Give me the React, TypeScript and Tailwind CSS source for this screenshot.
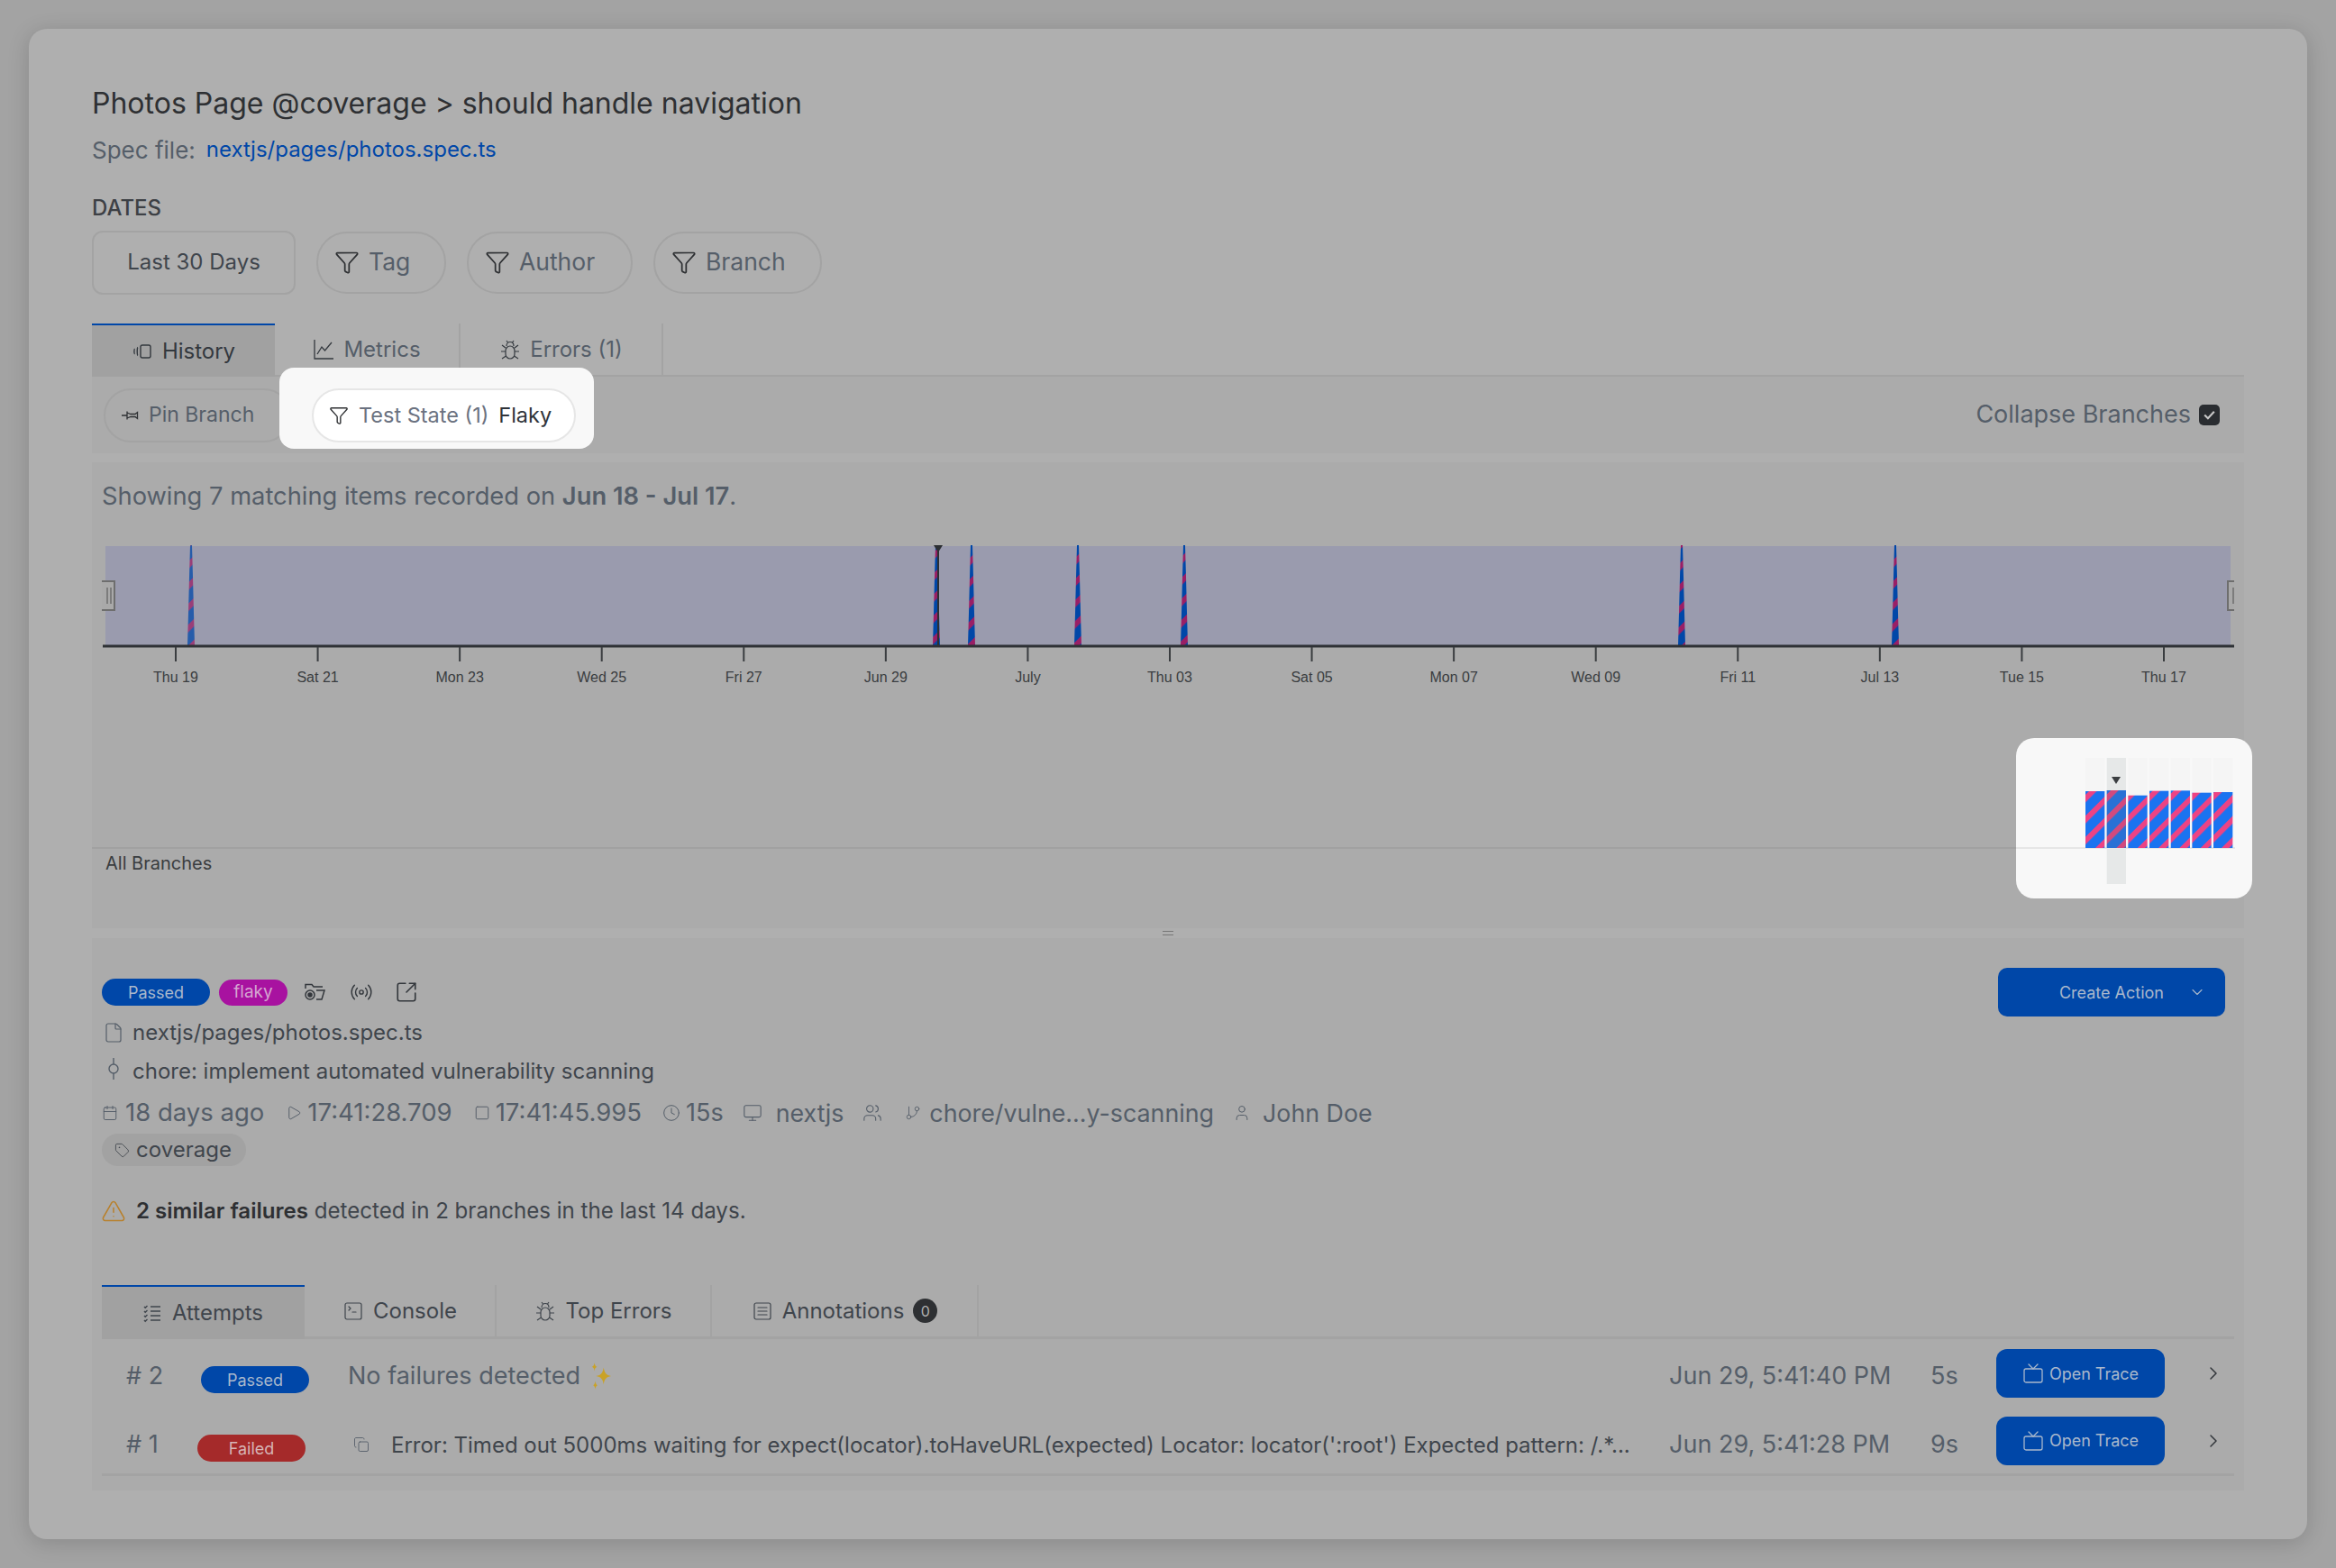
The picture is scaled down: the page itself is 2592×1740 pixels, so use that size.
import {
  Calendar,
  ChevronDown,
  ChevronRight,
  Clock,
  Copy,
  File,
  Filter,
  GitBranch,
  Monitor,
  Play,
  Radio,
  Square,
  SquareArrowOutUpRight,
  SquareMenu,
  SquareTerminal,
  Tag,
  TriangleAlert,
  Tv,
  User,
  Users,
} from "lucide-react";

const ticks = ["Thu 19", "Sat 21", "Mon 23", "Wed 25", "Fri 27", "Jun 29", "July", "Thu 03", "Sat 05", "Mon 07", "Wed 09", "Fri 11", "Jul 13", "Tue 15", "Thu 17"];
const spikes = [110, 937, 976, 1094, 1212, 1764, 2001];
const barTops = [894, 891, 908, 893, 892, 899, 897];

function HistoryIcon() {
  return (
    <svg width="24" height="24" viewBox="0 0 24 24" fill="none" stroke="currentColor" strokeWidth="1.400">
      <rect x="10" y="5" width="11" height="14" rx="2" />
      <path d="M7 7.500c-1 .5-1 8.500 0 9M3.500 9c-.8.5-.8 5.500 0 6" />
    </svg>
  );
}

function MetricsIcon() {
  return (
    <svg width="24" height="24" viewBox="0 0 24 24" fill="none" stroke="currentColor" strokeWidth="1.300">
      <path d="M2 1v21h21" />
      <path d="M5 17l5-8 3.500 4L21 4" />
    </svg>
  );
}

function BugIcon() {
  return (
    <svg width="24" height="24" viewBox="0 0 24 24" fill="none" stroke="currentColor" strokeWidth="1.200">
      <path d="M8 8c0-6 8-6 8 0" />
      <rect x="7" y="8" width="10" height="14" rx="5" />
      <path d="M8 2l1.500 2M16 2l-1.500 2M7 10L3 7M17 10l4-3M7 14H2M17 14h5M7.500 19L3 22M16.500 19l4.500 3" />
    </svg>
  );
}

function PinIcon() {
  return (
    <svg width="20" height="20" viewBox="0 0 20 20" fill="none" stroke="#2e3033" strokeWidth="1.300">
      <path d="M0 10h6M6 5.500v9M6 7l4 1.500h5l2.500-2v7l-2.500-2h-5L6 13" />
    </svg>
  );
}

function CommitIcon() {
  return (
    <svg width="24" height="24" viewBox="0 0 24 24" fill="none" stroke="currentColor" strokeWidth="1.400" className="ml-[1px] mr-[9px] -mt-[6px]">
      <circle cx="12" cy="12" r="5" />
      <path d="M12 0v7M12 17v7" />
    </svg>
  );
}

function FolderCamIcon() {
  return (
    <svg width="24" height="24" viewBox="0 0 24 24" fill="none" stroke="#33373c" strokeWidth="1.500">
      <path d="M2 8V3.500h7l2 2.500h10M14 10h9l-3 10h-6" />
      <circle cx="7" cy="15" r="5" />
      <circle cx="7" cy="15" r="2" fill="#33373c" />
    </svg>
  );
}

function AttemptsIcon() {
  return (
    <svg width="24" height="24" viewBox="0 0 24 24" fill="none" stroke="currentColor" strokeWidth="1.400">
      <path d="M10 5h11M10 10h11M10 15h11M10 20h11" />
      <path d="M3 5l1.200 1.200L6.500 4M3 10l1.200 1.200L6.500 9M3 15l1.200 1.200L6.500 14M3 20l1.200 1.200L6.500 19" />
    </svg>
  );
}

function Sparkle() {
  return (
    <svg width="24" height="34" viewBox="0 0 26 34" fill="#c9a227">
      <path d="M16 7c1 6 3 9 9 10-6 1-8 4-9 10-1-6-3-9-9-10 6-1 8-4 9-10z" />
      <path d="M5 1c.4 3 1.200 4.200 3 5-1.800.8-2.600 2-3 5-.4-3-1.200-4.200-3-5 1.800-.8 2.600-2 3-5z" />
      <path d="M6 23c.4 3 1 4.200 2.500 5-1.500.8-2.100 2-2.500 5-.4-3-1-4.200-2.500-5 1.500-.8 2.100-2 2.500-5z" />
    </svg>
  );
}

function Timeline() {
  return (
    <svg width="2388" height="180" viewBox="0 0 2388 180" className="block" fontFamily="'Liberation Sans', Arial, sans-serif">
      <defs>
        <pattern id="dimStripe" width="16.500" height="16.500" patternUnits="userSpaceOnUse" patternTransform="rotate(45)">
          <rect width="16.500" height="16.500" fill="#0047a8" />
          <rect width="6" height="16.500" fill="#991f66" />
        </pattern>
      </defs>
      <rect x="15" y="16" width="2358" height="110" fill="#9a9bae" />
      {spikes.map((x, i) => (
        <path
          key={x}
          d={`M${x - 1} 15 L${x + 1} 15 L${x + 2} 50 L${x + 3} 90 L${x + 4} 126 L${x - 4} 126 L${x - 3} 90 L${x - 2} 50 Z`}
          fill="url(#dimStripe)"
          opacity={i === 0 ? 0.75 : 1}
        />
      ))}
      <path d="M939 16v110" stroke="#2c2f33" strokeWidth="2" />
      <path d="M934 15h10l-5 8z" fill="#2c2f33" />
      <path d="M12 127h2365" stroke="#2f3236" strokeWidth="3" />
      {ticks.map((t, i) => {
        const x = 93 + i * 157.57;
        return (
          <g key={t}>
            <path d={`M${x} 128v16`} stroke="#3a3d40" strokeWidth="2" />
            <text x={x} y="167" textAnchor="middle" fontSize="16" fill="#3a3d40">{t}</text>
          </g>
        );
      })}
      <path d="M11 55h14v32h-14" fill="#a9a9a9" stroke="#6e6e6e" strokeWidth="2" />
      <path d="M17 62v18M21 62v18" stroke="#7c7c7c" strokeWidth="2" />
      <path d="M2377 55h-7v32h7" fill="#a9a9a9" stroke="#6e6e6e" strokeWidth="2" />
      <path d="M2376 62v18" stroke="#7c7c7c" strokeWidth="2" />
    </svg>
  );
}

function FlakyBars() {
  return (
    <svg width="262" height="178" viewBox="0 0 262 178" className="block">
      <defs>
        <pattern id="brightStripe" width="16.500" height="16.500" patternUnits="userSpaceOnUse" patternTransform="rotate(45)">
          <rect width="16.500" height="16.500" fill="#1a73f0" />
          <rect width="6" height="16.500" fill="#ec4384" />
        </pattern>
      </defs>
      <path d="M0 122h243" stroke="#e6e6e6" strokeWidth="2" />
      {barTops.map((top, i) => {
        const x = 77 + i * 23.67;
        const y = top / 3 + 580 - 819;
        return (
          <g key={top + "-" + i}>
            <rect x={x} y={22} width={21.3} height={i === 1 ? 140 : 100} fill={i === 1 ? "#e6e8e8" : "#f5f5f5"} />
            <rect x={x} y={y} width={21.3} height={122 - y} fill="url(#brightStripe)" />
            {i === 1 && <rect x={x} y={y} width={21.3} height={122 - y} fill="#6b6b6b" opacity="0.2" />}
          </g>
        );
      })}
      <path d="M106 43h10l-5 8z" fill="#3a3d40" />
    </svg>
  );
}

export default function App() {
  return (
    <div className="w-[2592px] h-[1740px] bg-[#a3a3a3] p-[32px] font-['Inter',sans-serif] text-[#555e69] overflow-hidden">
      <div className="h-[1676px] rounded-[20px] bg-[#afafaf] px-[70px] pt-[60px] shadow-[0_4px_24px_rgba(0,0,0,0.16)]">
        <h1 className="h-[46px] flex items-center text-[32px] text-[#2e3033]">Photos Page @coverage &gt; should handle navigation</h1>
        <div className="mt-[10px] h-[36px] flex items-center gap-[12px]">
          <span className="text-[26px]">Spec file:</span>
          <span className="text-[24px] text-[#0047a8]">nextjs/pages/photos.spec.ts</span>
        </div>
        <div className="mt-[32px] h-[30px] flex items-center text-[24px] font-medium text-[#3d4045]">DATES</div>

        <div className="mt-[9px] h-[72px] flex items-center gap-[23px] text-[26.500px]">
          <div className="w-[226px] h-[71px] flex items-center justify-center rounded-[12px] border-2 border-[#a3a3a3] text-[#3f454c] text-[24px]">Last 30 Days</div>
          {[["Tag", "w-[144px]"], ["Author", "w-[184px]"], ["Branch", "w-[187px]"]].map(([label, w]) => (
            <div key={label} className={w + " h-[69px] flex items-center gap-[10px] pl-[18px] rounded-[34px] border-2 border-[#a3a3a3]"}>
              <Filter size={28} strokeWidth={1.500} className="text-[#2e3033]" />
              <span>{label}</span>
            </div>
          ))}
        </div>

        <div className="mt-[32px] h-[59px] flex text-[24px] border-b-2 border-[#a3a3a3]">
          <div className="w-[203px] h-[59px] flex items-center justify-center gap-[10px] bg-[#a1a1a1] border-t-2 border-[#0047a8] text-[#33383e]">
            <HistoryIcon />
            <span>History</span>
          </div>
          <div className="w-[206px] flex items-center justify-center gap-[10px] border-r-2 border-[#a3a3a3]">
            <span className="text-[#33383e]"><MetricsIcon /></span>
            <span>Metrics</span>
          </div>
          <div className="w-[225px] flex items-center justify-center gap-[10px] border-r-2 border-[#a3a3a3]">
            <span className="text-[#33383e]"><BugIcon /></span>
            <span>Errors (1)</span>
          </div>
        </div>

        <div className="relative h-[85px] bg-[#ababab] flex items-center justify-between pl-[13px] pr-[27px]">
          <div className="w-[208px] h-[60px] flex items-center gap-[10px] pl-[18px] rounded-full border-2 border-[#a3a3a3] text-[23px]">
            <PinIcon />
            <span>Pin Branch</span>
          </div>
          <div className="absolute left-[208px] top-[-10px] w-[349px] h-[90px] rounded-[16px] bg-[#f8f8f8] pl-[36px] pt-[23px]">
            <div className="w-[293px] h-[60px] flex items-center pl-[17px] rounded-full border-2 border-[#e6e6e6] bg-white text-[23.500px] text-[#6b7280]">
              <Filter size={22} strokeWidth={1.500} className="text-[#2e3033] mr-[11px]" />
              <span className="mr-[11px]">Test State (1)</span>
              <span className="text-[#30343a]">Flaky</span>
            </div>
          </div>
          <div className="flex items-center gap-[9px] text-[27px]">
            <span>Collapse Branches</span>
            <div className="w-[23px] h-[23px] rounded-[5px] bg-[#2a2d31] flex items-center justify-center">
              <svg width="17" height="17" viewBox="0 0 16 16" fill="none" stroke="#c8c8c8" strokeWidth="2"><path d="M3 8l3.500 3.500L13 4.500" /></svg>
            </div>
          </div>
        </div>

        <div className="relative mt-[10px] h-[517px] bg-[#ababab]">
          <div className="h-[77px] pt-[18px] pl-[11px] text-[27.300px]">
            Showing 7 matching items recorded on <b className="font-semibold">Jun 18 - Jul 17</b>.
          </div>
          <Timeline />
          <div className="h-[172px] border-b-2 border-[#a1a1a1]" />
          <div className="pl-[15px] mt-[1px] text-[20px] text-[#3a3d40]">All Branches</div>
          <div className="absolute left-[2135px] top-[306px] w-[262px] h-[178px] rounded-[20px] bg-[#f8f8f8] overflow-hidden">
            <FlakyBars />
          </div>
        </div>

        <div className="h-[11px] flex items-center justify-center">
          <div className="w-[12px] h-[5px] border-y border-[#777]" />
        </div>

        <div className="h-[613px] bg-[#ababab] px-[11px] pt-[33px]">
          <div className="h-[54px] flex items-center justify-between">
            <div className="flex items-center">
              <span className="w-[120px] h-[30px] rounded-full bg-[#0047a8] text-[#a9b8cc] text-[18px] flex items-center justify-center">Passed</span>
              <span className="ml-[10px] w-[76px] h-[29px] rounded-full bg-[#a812a0] text-[#d5a5d1] text-[19px] flex items-center justify-center">flaky</span>
              <span className="ml-[18px]"><FolderCamIcon /></span>
              <Radio size={26} strokeWidth={1.300} className="ml-[27px] text-[#33373c]" />
              <SquareArrowOutUpRight size={26} strokeWidth={1.500} className="ml-[24px] text-[#33373c]" />
            </div>
            <div className="mr-[10px] w-[252px] h-[54px] rounded-[10px] bg-[#0047a8] text-[#a9b8cc] text-[18px] flex items-center justify-end pr-[21px]">
              <span>Create Action</span>
              <ChevronDown size={20} strokeWidth={1.300} className="ml-[27px]" />
            </div>
          </div>

          <div className="h-[36px] flex items-center text-[24px] text-[#3f454c]">
            <File size={24} strokeWidth={1.200} className="text-[#555e69] mr-[9px] ml-[1px]" />
            <span>nextjs/pages/photos.spec.ts</span>
          </div>
          <div className="mt-[7px] h-[36px] flex items-center text-[24px] text-[#3f454c]">
            <span className="text-[#555e69]"><CommitIcon /></span>
            <span>chore: implement automated vulnerability scanning</span>
          </div>
          <div className="mt-[9px] h-[38px] flex items-center text-[27.500px] whitespace-nowrap">
            <Calendar size={18} strokeWidth={1.300} className="mr-[8px]" />
            <span>18 days ago</span>
            <Play size={18} strokeWidth={1.300} className="ml-[24px] mr-[6px]" />
            <span>17:41:28.709</span>
            <Square size={18} strokeWidth={1.300} className="ml-[24px] mr-[6px]" />
            <span>17:41:45.995</span>
            <Clock size={20} strokeWidth={1.200} className="ml-[23px] mr-[6px]" />
            <span className="text-[27px]">15s</span>
            <Monitor size={22} strokeWidth={1.200} className="ml-[21px] mr-[15px]" />
            <span className="text-[26.800px]">nextjs</span>
            <Users size={22} strokeWidth={1.200} className="ml-[21px]" />
            <GitBranch size={18} strokeWidth={1.200} className="ml-[25px] mr-[9px]" />
            <span className="text-[26.800px]">chore/vulne...y-scanning</span>
            <User size={20} strokeWidth={1.200} className="ml-[21px] mr-[13px]" />
            <span className="text-[26.800px]">John Doe</span>
          </div>
          <div className="mt-[4px] w-[160px] h-[36px] rounded-full bg-[#a2a2a2] flex items-center gap-[7px] pl-[14px] text-[24px] text-[#3f454c]">
            <Tag size={17} strokeWidth={1.200} />
            <span>coverage</span>
          </div>
          <div className="mt-[32px] h-[36px] flex items-center text-[24.100px] text-[#3f454c]">
            <TriangleAlert size={28} strokeWidth={1.300} className="text-[#b8802c] -ml-[1px] mr-[11px]" />
            <span><b className="font-semibold text-[#2e3033]">2 similar failures</b> detected in 2 branches in the last 14 days.</span>
          </div>

          <div className="mt-[64px] h-[60px] flex text-[24px] border-b-[3px] border-[#a3a3a3] text-[#3f454c]">
            <div className="w-[225px] h-[60px] flex items-center justify-center gap-[10px] pr-[2px] bg-[#a1a1a1] border-t-2 border-[#0047a8]">
              <AttemptsIcon />
              <span>Attempts</span>
            </div>
            <div className="w-[213px] flex items-center justify-center gap-[10px] border-r-2 border-[#a3a3a3]">
              <SquareTerminal size={24} strokeWidth={1.200} />
              <span>Console</span>
            </div>
            <div className="w-[239px] flex items-center justify-center gap-[10px] border-r-2 border-[#a3a3a3]">
              <BugIcon />
              <span>Top Errors</span>
            </div>
            <div className="w-[296px] flex items-center justify-center gap-[10px] border-r-2 border-[#a3a3a3]">
              <SquareMenu size={24} strokeWidth={1.200} />
              <span>Annotations</span>
              <span className="w-[27px] h-[27px] rounded-full bg-[#2e3033] text-[#b0b0b0] text-[16px] flex items-center justify-center">0</span>
            </div>
          </div>

          <div className="h-[76px] flex items-center">
            <span className="w-[110px] pl-[27px] text-[27px] mt-[6px]"># 2</span>
            <span className="w-[120px] h-[30px] mt-[14px] rounded-full bg-[#0047a8] text-[#a9b8cc] text-[18px] flex items-center justify-center">Passed</span>
            <span className="ml-[43px] flex items-center gap-[11px] text-[27px] mt-[6px]">No failures detected <Sparkle /></span>
            <span className="ml-auto w-[290px] text-[27px] mt-[6px]">Jun 29, 5:41:40 PM</span>
            <span className="w-[73px] text-[27px] mt-[6px]">5s</span>
            <TraceButton />
            <ChevronRight size={24} strokeWidth={1.500} className="ml-[42px] mr-[11px] text-[#33373c]" />
          </div>
          <div className="h-[76px] flex items-center border-b-[3px] border-[#a3a3a3]">
            <span className="w-[106px] pl-[27px] text-[27px] mt-[9px]"># 1</span>
            <span className="w-[120px] h-[30px] mt-[17px] rounded-full bg-[#a52a2a] text-[#d7b5b5] text-[18px] flex items-center justify-center">Failed</span>
            <Copy size={18} strokeWidth={1.200} className="ml-[53px] mr-[24px] mt-[9px]" />
            <span className="shrink-0 whitespace-nowrap text-[24px] text-[#3f454c] mt-[10px]">Error: Timed out 5000ms waiting for expect(locator).toHaveURL(expected) Locator: locator(':root') Expected pattern: /.*...</span>
            <span className="ml-auto w-[290px] text-[27px] mt-[9px]">Jun 29, 5:41:28 PM</span>
            <span className="w-[73px] text-[27px] mt-[9px]">9s</span>
            <TraceButton />
            <ChevronRight size={24} strokeWidth={1.500} className="ml-[42px] mr-[11px] text-[#33373c]" />
          </div>
        </div>
      </div>
    </div>
  );
}

function TraceButton() {
  return (
    <div className="w-[187px] h-[54px] rounded-[12px] bg-[#0047a8] text-[#a9b8cc] text-[18px] flex items-center justify-center gap-[6px]">
      <Tv size={24} strokeWidth={1.300} />
      <span>Open Trace</span>
    </div>
  );
}
